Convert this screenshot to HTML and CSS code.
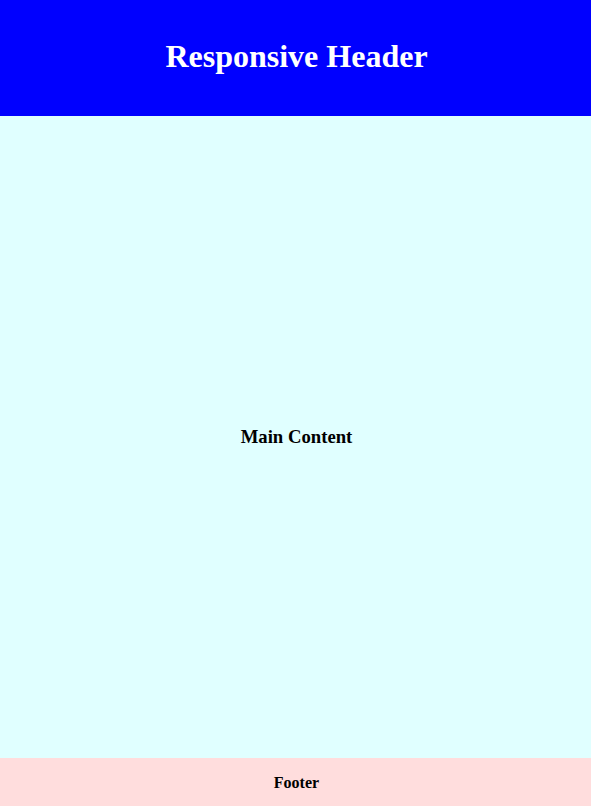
FILE: index.html
```html
<!DOCTYPE html>
<html lang="en">
<head>
<meta charset="utf-8">
<title>Responsive Header</title>
<link rel="stylesheet" href="styles.css">
</head>
<body>
<div class="page">
  <header class="site-header">
    <h1 class="site-title">Responsive Header</h1>
  </header>
  <main class="site-main">
    <h3 class="main-title">Main Content</h3>
  </main>
  <footer class="site-footer">
    <p class="footer-text">Footer</p>
  </footer>
</div>
</body>
</html>
```
FILE: styles.css
```css
html, body {
  margin: 0;
  padding: 0;
}
body {
  font-family: "Liberation Serif", "Times New Roman", serif;
}
.page {
  display: flex;
  flex-direction: column;
  min-height: 100vh;
}
.site-header {
  background: #0000ff;
  color: #ffffff;
  height: 116px;
  display: flex;
  align-items: center;
  justify-content: center;
  padding: 0 0 4px 2px;
  box-sizing: border-box;
}
.site-title {
  margin: 0;
  font-size: 32px;
  font-weight: bold;
}
.site-main {
  flex: 1;
  background: #e0ffff;
  display: flex;
  align-items: center;
  justify-content: center;
  padding-left: 2px;
}
.main-title {
  margin: 0;
  font-size: 18.72px;
  font-weight: bold;
}
.site-footer {
  background: #ffdddd;
  height: 48px;
  display: flex;
  align-items: center;
  justify-content: center;
  padding: 2px 0 0 2px;
  box-sizing: border-box;
}
.footer-text {
  margin: 0;
  font-size: 16px;
  font-weight: bold;
}
```
